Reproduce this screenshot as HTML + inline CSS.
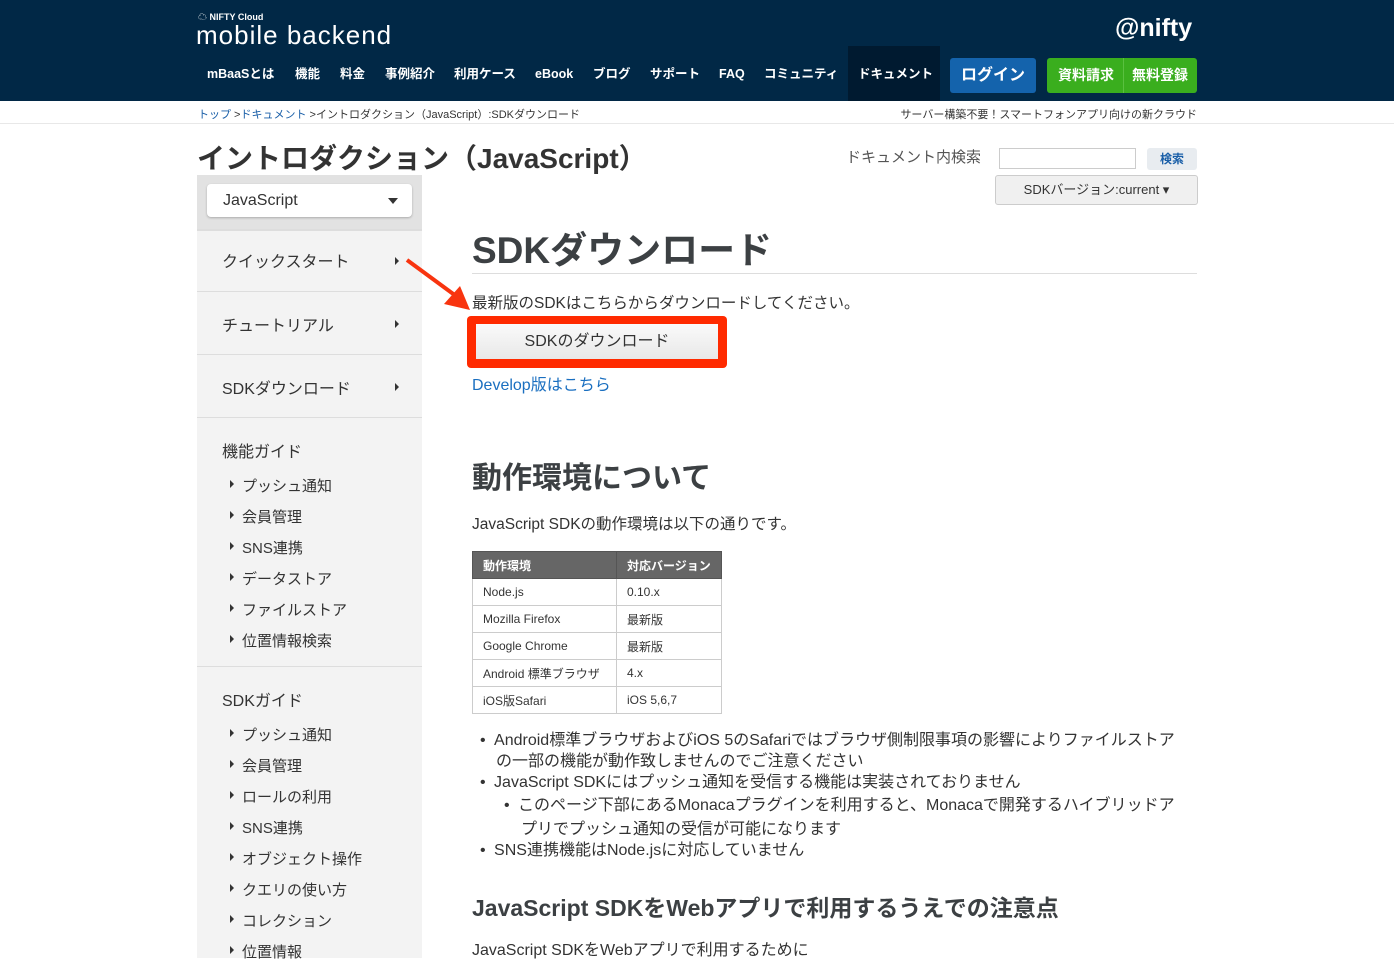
<!DOCTYPE html>
<html><head><meta charset="utf-8"><style>
*{margin:0;padding:0;box-sizing:border-box}
body{width:1394px;height:958px;overflow:hidden;background:#fff;font-family:"Liberation Sans","Noto Sans CJK JP",sans-serif;color:#333;position:relative}
.a{position:absolute;white-space:nowrap}
#hd{position:absolute;left:0;top:0;width:1394px;height:101px;background:#012846}
.nav{top:66px;font-size:12.5px;font-weight:bold;color:#fff;line-height:16px}
.sb{position:absolute;left:197px;width:225px;background:#f3f3f3}
.si{font-size:16px;color:#333}
.sub{font-size:15px;color:#333}
.tri{display:inline-block;width:0;height:0;border-left:4px solid #333;border-top:4px solid transparent;border-bottom:4px solid transparent}
table{border-collapse:collapse;font-size:12px}
td,th{border:1px solid #ccc;height:27px;padding:0 10px;text-align:left}
th{background:#666;color:#fff;font-weight:bold;border-color:#555}
</style></head><body>
<div id="hd"></div>
<div class="a" style="left:198px;top:11px;color:#fff;font-size:9px;font-weight:bold;line-height:12px">☁ NIFTY Cloud</div>
<div class="a" style="left:196px;top:21px;color:#fff;font-size:26px;line-height:28px;font-family:'Liberation Sans',sans-serif;letter-spacing:1px">mobile backend</div>
<div class="a" style="left:1115px;top:14px;color:#fff;font-size:25px;font-weight:bold">@nifty</div>
<div class="a" style="left:848px;top:46px;width:92px;height:55px;background:#001a30"></div>
<div class="a nav" style="left:207px">mBaaSとは</div>
<div class="a nav" style="left:295px">機能</div>
<div class="a nav" style="left:340px">料金</div>
<div class="a nav" style="left:385px">事例紹介</div>
<div class="a nav" style="left:454px">利用ケース</div>
<div class="a nav" style="left:535px">eBook</div>
<div class="a nav" style="left:593px">ブログ</div>
<div class="a nav" style="left:650px">サポート</div>
<div class="a nav" style="left:719px">FAQ</div>
<div class="a nav" style="left:764px">コミュニティ</div>
<div class="a nav" style="left:858px">ドキュメント</div>
<div class="a" style="left:950px;top:58px;width:86px;height:35px;background:#1463ac;border-radius:3px;color:#fff;font-size:16px;font-weight:bold;text-align:center;line-height:35px">ログイン</div>
<div class="a" style="left:1047px;top:58px;width:150px;height:35px;background:#3aae1e;border-radius:3px;color:#fff;font-size:14px;font-weight:bold;line-height:35px"><span style="position:absolute;left:11px">資料請求</span><span style="position:absolute;left:76px;top:0;width:1px;height:35px;background:#5ac040"></span><span style="position:absolute;left:85px">無料登録</span></div>
<div class="a" style="left:198px;top:106px;font-size:11px;color:#333"><span style="color:#1a5fa8">トップ</span> &gt;<span style="color:#1a5fa8">ドキュメント</span> &gt;イントロダクション（JavaScript）:SDKダウンロード</div>
<div class="a" style="right:197px;top:106px;font-size:11px;color:#333">サーバー構築不要！スマートフォンアプリ向けの新クラウド</div>
<div class="a" style="left:0;top:123px;width:1394px;height:1px;background:#e8e8e8"></div>
<div class="a" style="left:197px;top:137px;font-size:28px;font-weight:bold;color:#333">イントロダクション（JavaScript）</div>
<div class="a" style="left:846px;top:146px;font-size:15px;color:#555">ドキュメント内検索</div>
<div class="a" style="left:999px;top:148px;width:137px;height:21px;border:1px solid #ccc;background:#fff"></div>
<div class="a" style="left:1147px;top:148px;width:50px;height:22px;background:#e8ecf0;border-radius:3px;color:#1a5fa8;font-size:12px;font-weight:bold;text-align:center;line-height:22px">検索</div>
<div class="a" style="left:995px;top:175px;width:203px;height:30px;background:#f0f0f0;border:1px solid #ccc;border-radius:3px;font-size:13px;color:#333;text-align:center;line-height:28px">SDKバージョン:current ▾</div>

<div class="sb" style="top:175px;height:54px;background:#e2e2e2"></div>
<div class="a" style="left:207px;top:184px;width:205px;height:33px;background:#fff;border-radius:4px;box-shadow:0 1px 2px #aaa;font-size:16px;line-height:33px;padding-left:16px">JavaScript<span style="position:absolute;right:14px;top:14px;border-top:6px solid #333;border-left:5px solid transparent;border-right:5px solid transparent"></span></div>
<div class="sb" style="top:229px;height:729px"></div>
<div class="a" style="left:197px;top:229px;width:225px;height:2px;background:#ddd"></div>
<div class="a" style="left:197px;top:291px;width:225px;height:1px;background:#ddd"></div>
<div class="a" style="left:197px;top:354px;width:225px;height:1px;background:#ddd"></div>
<div class="a" style="left:197px;top:417px;width:225px;height:1px;background:#ddd"></div>
<div class="a" style="left:197px;top:666px;width:225px;height:1px;background:#ddd"></div>
<div class="a si" style="left:222px;top:248px">クイックスタート</div><div class="a tri" style="left:395px;top:257px"></div>
<div class="a si" style="left:222px;top:312px">チュートリアル</div><div class="a tri" style="left:395px;top:320px"></div>
<div class="a si" style="left:222px;top:375px">SDKダウンロード</div><div class="a tri" style="left:395px;top:383px"></div>
<div class="a si" style="left:222px;top:438px">機能ガイド</div>
<div class="a sub" style="left:230px;top:475px"><span class="tri" style="vertical-align:3px;margin-right:8px"></span>プッシュ通知</div>
<div class="a sub" style="left:230px;top:506px"><span class="tri" style="vertical-align:3px;margin-right:8px"></span>会員管理</div>
<div class="a sub" style="left:230px;top:537px"><span class="tri" style="vertical-align:3px;margin-right:8px"></span>SNS連携</div>
<div class="a sub" style="left:230px;top:568px"><span class="tri" style="vertical-align:3px;margin-right:8px"></span>データストア</div>
<div class="a sub" style="left:230px;top:599px"><span class="tri" style="vertical-align:3px;margin-right:8px"></span>ファイルストア</div>
<div class="a sub" style="left:230px;top:630px"><span class="tri" style="vertical-align:3px;margin-right:8px"></span>位置情報検索</div>
<div class="a si" style="left:222px;top:687px">SDKガイド</div>
<div class="a sub" style="left:230px;top:724px"><span class="tri" style="vertical-align:3px;margin-right:8px"></span>プッシュ通知</div>
<div class="a sub" style="left:230px;top:755px"><span class="tri" style="vertical-align:3px;margin-right:8px"></span>会員管理</div>
<div class="a sub" style="left:230px;top:786px"><span class="tri" style="vertical-align:3px;margin-right:8px"></span>ロールの利用</div>
<div class="a sub" style="left:230px;top:817px"><span class="tri" style="vertical-align:3px;margin-right:8px"></span>SNS連携</div>
<div class="a sub" style="left:230px;top:848px"><span class="tri" style="vertical-align:3px;margin-right:8px"></span>オブジェクト操作</div>
<div class="a sub" style="left:230px;top:879px"><span class="tri" style="vertical-align:3px;margin-right:8px"></span>クエリの使い方</div>
<div class="a sub" style="left:230px;top:910px"><span class="tri" style="vertical-align:3px;margin-right:8px"></span>コレクション</div>
<div class="a sub" style="left:230px;top:941px"><span class="tri" style="vertical-align:3px;margin-right:8px"></span>位置情報</div>

<div class="a" style="left:472px;top:220px;font-size:37px;font-weight:bold;color:#3c4043">SDKダウンロード</div>
<div class="a" style="left:472px;top:273px;width:725px;height:1px;background:#ddd"></div>
<div class="a" style="left:472px;top:291px;font-size:15.5px;color:#333">最新版のSDKはこちらからダウンロードしてください。</div>
<svg class="a" style="left:404px;top:256px" width="70" height="60"><line x1="3" y1="4" x2="52" y2="40" stroke="#f8340f" stroke-width="4"/><polygon points="66,54 40,48 56,30" fill="#f8340f"/></svg>
<div class="a" style="left:467px;top:316px;width:260px;height:52px;background:#ff2a00;border-radius:4px"></div>
<div class="a" style="left:476px;top:324px;width:242px;height:35px;background:linear-gradient(#fafafa,#e8e8e8);font-size:16px;color:#333;text-align:center;line-height:35px">SDKのダウンロード</div>
<div class="a" style="left:472px;top:371px;font-size:16px;color:#1a6fc0">Develop版はこちら</div>
<div class="a" style="left:472px;top:453px;font-size:30px;font-weight:bold;color:#3c4043">動作環境について</div>
<div class="a" style="left:472px;top:512px;font-size:15.5px;color:#333">JavaScript SDKの動作環境は以下の通りです。</div>
<table class="a" style="left:472px;top:551px;width:250px">
<tr><th style="width:144px">動作環境</th><th>対応バージョン</th></tr>
<tr><td>Node.js</td><td>0.10.x</td></tr>
<tr><td>Mozilla Firefox</td><td>最新版</td></tr>
<tr><td>Google Chrome</td><td>最新版</td></tr>
<tr><td>Android 標準ブラウザ</td><td>4.x</td></tr>
<tr><td>iOS版Safari</td><td>iOS 5,6,7</td></tr>
</table>
<div class="a" style="left:480px;top:730px;font-size:16px;line-height:21px;color:#333">
• <span style="margin-left:4px">Android標準ブラウザおよびiOS 5のSafariではブラウザ側制限事項の影響によりファイルストア</span><br>
<span style="margin-left:16px">の一部の機能が動作致しませんのでご注意ください</span><br>
• <span style="margin-left:4px">JavaScript SDKにはプッシュ通知を受信する機能は実装されておりません</span><br>
<span style="margin-left:24px;line-height:26px">• <span style="margin-left:4px">このページ下部にあるMonacaプラグインを利用すると、Monacaで開発するハイブリッドア</span></span><br>
<span style="margin-left:41px">プリでプッシュ通知の受信が可能になります</span><br>
• <span style="margin-left:4px">SNS連携機能はNode.jsに対応していません</span>
</div>
<div class="a" style="left:472px;top:889px;font-size:23px;font-weight:bold;color:#3c4043">JavaScript SDKをWebアプリで利用するうえでの注意点</div>
<div class="a" style="left:472px;top:936px;font-size:16px;color:#333">JavaScript SDKをWebアプリで利用するために</div>
</body></html>
